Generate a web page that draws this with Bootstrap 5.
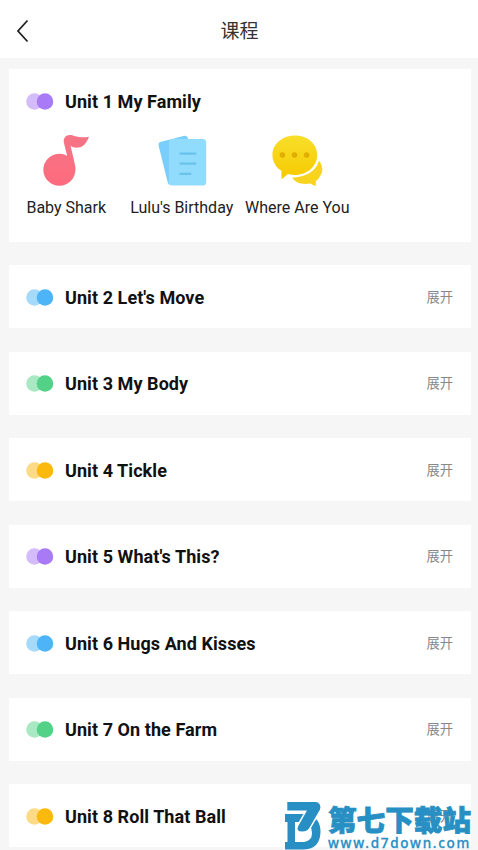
<!DOCTYPE html>
<html lang="zh-CN">
<head>
<meta charset="utf-8">
<meta name="viewport" content="width=device-width, initial-scale=1">
<title>课程</title>
<link href="https://cdn.jsdelivr.net/npm/bootstrap@5.3.0/dist/css/bootstrap.min.css" rel="stylesheet">
<style>
body{background:#f6f6f6;font-family:Roboto,"Noto Sans CJK SC",sans-serif;color:#111;height:850px}
.topbar{height:58px;padding:3px 14px 0 15px}
.topbar h1{font-size:19px;line-height:28px;color:#333;padding-top:3px}
.side{width:16px}
.units{padding:11px 7px 0 8.5px;gap:23.5px}
.unit{height:63px;padding:1px 18px 0 17.5px;flex:none}
.unit.opened{height:172.5px;padding-top:0}
.unit-head{height:65px;gap:11.5px}
.unit-title{font-size:18px;line-height:24px;letter-spacing:.07px}
.unit:not(.opened) .unit-title,.more{padding-top:1.4px}
.dots{width:27.5px;height:17px}
.purple{color:#a97af5}.blue{color:#4db5f7}.green{color:#52d187}.amber{color:#fbb80d}
.more{font-size:13.3px;color:#888}
.lessons{margin-left:-17.5px}
.lesson{width:115.5px;font-size:16px;line-height:20px;color:#222}
.lesson svg{width:70px;height:70px;margin:-9px 0 3px}
.stamp{left:278px;top:795px;width:200px;height:55px;color:#278fc3}
.stamp-logo{left:0;top:0}
.stamp-name{left:50px;top:6px;font:900 28.6px/36px "Noto Sans CJK SC",sans-serif;-webkit-text-stroke:.8px #278fc3}
.stamp-url{left:50px;top:41px;font:500 13.5px/14px "Noto Sans",sans-serif;letter-spacing:1.72px;-webkit-text-stroke:.3px #278fc3}
</style>
</head>
<body class="overflow-hidden position-relative">
<svg class="d-none"><symbol id="dots" viewBox="0 0 27.5 17"><circle cx="8.5" cy="8.5" r="8.3" fill="currentColor" opacity=".5"/><circle cx="19" cy="8.5" r="8.3" fill="currentColor"/></symbol></svg>
<header class="topbar bg-white d-flex align-items-center justify-content-between">
<svg class="side" height="26" viewBox="0 0 16 26"><path d="M12.5 2.5 3 13l9.5 10.5" fill="none" stroke="#222" stroke-width="1.8"/></svg>
<h1 class="fw-normal mb-0">课程</h1><span class="side"></span>
</header>
<main class="units d-flex flex-column">
<section class="unit opened bg-white">
<div class="unit-head d-flex align-items-center"><svg class="dots purple"><use href="#dots"/></svg><span class="unit-title fw-bold">Unit 1 My Family</span></div>
<div class="lessons d-flex text-nowrap">
<div class="lesson d-flex flex-column align-items-center"><svg viewBox="1.25 0 70 70"><defs><linearGradient id="pink" gradientUnits="userSpaceOnUse" x1="0" y1="10" x2="0" y2="60"><stop stop-color="#f47486"/><stop offset="1" stop-color="#ff6b7e"/></linearGradient></defs><g fill="url(#pink)"><circle cx="29.6" cy="44.8" r="16"/><path d="M45.6 45C45.7 41 44.6 37 43.7 33L40.8 20.8C42.5 22.3 45.5 23 49 22.6 53.3 22 57.3 17.5 59.2 11.7 50 13.2 46.5 11.5 42.5 10.3 37 8.8 33 12.5 34.2 18L37.4 30.8 34 42Z"/></g></svg><span>Baby Shark</span></div>
<div class="lesson d-flex flex-column align-items-center"><svg viewBox="-2.9 0 70 70"><path fill="#79cefb" d="M10.5 17 33.5 10.9q3-.7 4.3 1.4L46 56 21 60q-2.6 0-3.3-3L8.8 21q-.7-3.3 1.7-4Z"/><rect x="19" y="14" width="37.3" height="46.5" rx="3.5" fill="#91dbfd"/><path d="M30.5 28.7h15M30.5 38.7h15M30.5 48.9h10" stroke="#69c3eb" stroke-width="2.2" stroke-linecap="round"/></svg><span>Lulu's Birthday</span></div>
<div class="lesson d-flex flex-column align-items-center"><svg viewBox="-2.9 0 70 70"><defs><linearGradient id="yellow" x2="0" y2="1"><stop stop-color="#f8df2a"/><stop offset="1" stop-color="#f6c900"/></linearGradient></defs><path fill="#f8d420" d="M53.9 35.5C59.4 42.3 58.5 49.5 51 56.2L50.7 61.3 45.3 58.5C37 60 30 57.8 27.3 52.6 40 52.4 52 46 53.9 35.5Z"/><path fill="url(#yellow)" d="M30 10.5C43 10.5 52.3 19 52.3 30S42.5 50 30 50q-4-.1-7-1l-6.3 5.3-.2-8.5C10.5 42.2 7.5 36.2 7.5 30 7.5 19 17.5 10.5 30 10.5Z"/><g fill="#dfae00"><circle cx="17.5" cy="30" r="2.8"/><circle cx="29.6" cy="30" r="2.8"/><circle cx="41.7" cy="30" r="2.8"/></g></svg><span>Where Are You</span></div>
</div>
</section>
<section class="unit bg-white d-flex align-items-center justify-content-between"><div class="unit-head d-flex align-items-center"><svg class="dots blue"><use href="#dots"/></svg><span class="unit-title fw-bold">Unit 2 Let's Move</span></div><span class="more">展开</span></section>
<section class="unit bg-white d-flex align-items-center justify-content-between"><div class="unit-head d-flex align-items-center"><svg class="dots green"><use href="#dots"/></svg><span class="unit-title fw-bold">Unit 3 My Body</span></div><span class="more">展开</span></section>
<section class="unit bg-white d-flex align-items-center justify-content-between"><div class="unit-head d-flex align-items-center"><svg class="dots amber"><use href="#dots"/></svg><span class="unit-title fw-bold">Unit 4 Tickle</span></div><span class="more">展开</span></section>
<section class="unit bg-white d-flex align-items-center justify-content-between"><div class="unit-head d-flex align-items-center"><svg class="dots purple"><use href="#dots"/></svg><span class="unit-title fw-bold">Unit 5 What's This?</span></div><span class="more">展开</span></section>
<section class="unit bg-white d-flex align-items-center justify-content-between"><div class="unit-head d-flex align-items-center"><svg class="dots blue"><use href="#dots"/></svg><span class="unit-title fw-bold">Unit 6 Hugs And Kisses</span></div><span class="more">展开</span></section>
<section class="unit bg-white d-flex align-items-center justify-content-between"><div class="unit-head d-flex align-items-center"><svg class="dots green"><use href="#dots"/></svg><span class="unit-title fw-bold">Unit 7 On the Farm</span></div><span class="more">展开</span></section>
<section class="unit bg-white d-flex align-items-center justify-content-between"><div class="unit-head d-flex align-items-center"><svg class="dots amber"><use href="#dots"/></svg><span class="unit-title fw-bold">Unit 8 Roll That Ball</span></div><span class="more">展开</span></section>
</main>
<div class="stamp position-absolute text-nowrap">
<svg class="stamp-logo position-absolute" width="46" height="55" viewBox="0 0 46 55"><path fill="currentColor" fill-rule="evenodd" d="M7 19H30Q42.5 23 42.5 37 42 54 26 54.5H7V47H9.5V27H7ZM17 27V47H26Q34 46 34 38 34 30 27 27Z"/><path fill="currentColor" stroke="#fff" stroke-width="3" paint-order="stroke" stroke-linejoin="round" d="M9.3 7H38Q43.5 8 42 14.5L31 33.5Q29 36.5 24 36.5 18 36.5 20 31.5L29 15.5H9.3Z"/></svg>
<span class="stamp-name position-absolute">第七下载站</span>
<span class="stamp-url position-absolute">www.d7down.com</span>
</div>
<script src="https://cdn.jsdelivr.net/npm/bootstrap@5.3.0/dist/js/bootstrap.bundle.min.js"></script>
</body>
</html>
